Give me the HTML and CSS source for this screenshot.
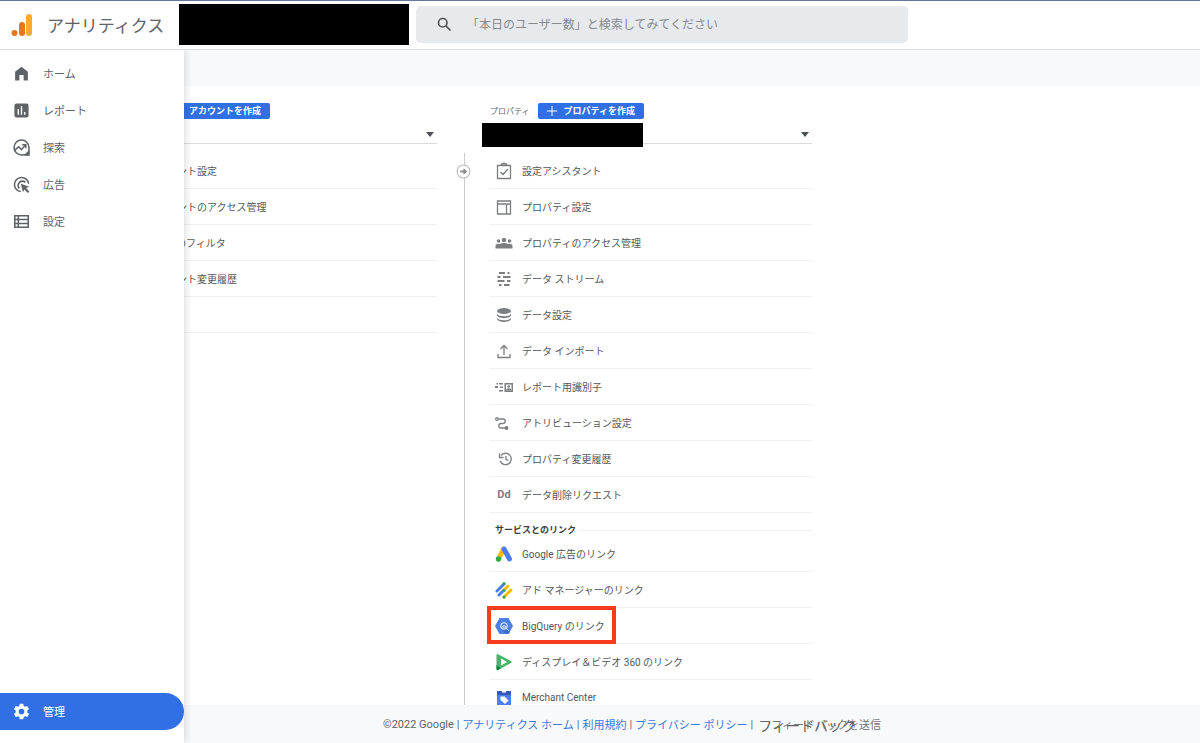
FILE: index.html
```html
<!DOCTYPE html>
<html lang="ja">
	<head>
		<meta charset="utf-8">
		<title>アナリティクス</title>
		<link rel="stylesheet" href="styles.css">
	</head>
	<body>
		<header class="header">
			<a class="brand" href="#">
				<svg class="logo" viewBox="0 0 24 24">
					<rect x="16" y="1" width="6" height="22" rx="3" fill="#f9ab2d"/>
					<rect x="9" y="9" width="6" height="14" rx="3" fill="#e37722"/>
					<circle cx="4.500" cy="20" r="3" fill="#e37722"/>
				</svg>
				<span>アナリティクス</span>
			</a>
			<div class="account"></div>
			<label class="search">
				<svg viewBox="0 0 24 24" fill="none" stroke="#4d5156" stroke-width="2.300"><circle cx="9.500" cy="9.500" r="6"/><path d="M14 14l6.500 6.500"/></svg>
				<input type="text" aria-label="検索" placeholder="「本日のユーザー数」と検索してみてください">
			</label>
		</header>

		<div class="page">
			<nav class="drawer">
				<a href="#">
					<svg viewBox="0 0 24 24"><path d="M3 9.500L12 2.500l9 7V22h-6v-8H9v8H3z"/></svg>
					ホーム
				</a>
				<a href="#">
					<svg viewBox="0 0 24 24"><path fill-rule="evenodd" d="M5 2h14a3 3 0 0 1 3 3v14a3 3 0 0 1-3 3H5a3 3 0 0 1-3-3V5a3 3 0 0 1 3-3zM6.500 10v8h2v-8zM11 6v12h2V6zm4.500 8v4h2v-4z"/></svg>
					レポート
				</a>
				<a href="#">
					<svg viewBox="0 0 24 24" fill="none" stroke="#5f6368" stroke-width="2.200"><path d="M22.500 22.500H12A10.500 10.500 0 1 1 22.500 12z"/><path d="M2 16l6-5 4 4 5-6"/><path d="M13 8h5v5" /><path d="M18 22l4-4v4z" fill="#5f6368"/></svg>
					探索
				</a>
				<a href="#">
					<svg viewBox="0 0 24 24" fill="none" stroke="#5f6368" stroke-width="2.200"><path d="M11 22A10 10 0 1 1 22 11"/><path d="M9 17.500A6 6 0 1 1 17.500 9"/><path d="M11 11l12 4-4.500 2 4.500 5-2 2-5-5-2 4z" fill="#5f6368" stroke="none"/></svg>
					広告
				</a>
				<a href="#">
					<svg viewBox="0 0 24 24" fill="none" stroke="#5f6368" stroke-width="2.200"><path d="M2.500 4h19v16h-19zM2 9.300h20M2 14.700h20M7.500 4v16"/></svg>
					設定
				</a>
				<a class="admin" href="#">
					<svg viewBox="0 0 24 24"><path fill-rule="evenodd" d="M9.500 1h5l.600 3.200 2 1.200 3-1.100 2.500 4.300-2.400 2.100v2.600l2.400 2.100-2.500 4.300-3-1.100-2 1.200-.600 3.200h-5l-.600-3.200-2-1.200-3 1.100-2.500-4.300 2.400-2.100v-2.600L1.400 8.600l2.500-4.300 3 1.100 2-1.200zM12 8a4 4 0 1 0 0 8 4 4 0 0 0 0-8z"/></svg>
					管理
				</a>
			</nav>

			<div class="band"></div>

			<main class="columns">
				<section class="column">
					<div class="column-head">
						<span>アカウント</span>
						<button class="create" type="button">
							<svg viewBox="0 0 12 12"><path d="M6 1v10M1 6h10"/></svg>
							アカウントを作成
						</button>
					</div>
					<div class="picker">
						<select aria-label="アカウント"><option></option></select>
					</div>
					<ul class="list">
						<li><a href="#"><i></i>アカウント設定</a></li>
						<li><a href="#"><i></i>アカウントのアクセス管理</a></li>
						<li><a href="#"><i></i>すべてのフィルタ</a></li>
						<li><a href="#"><i></i>アカウント変更履歴</a></li>
						<li><a href="#"><i></i>ゴミ箱</a></li>
					</ul>
				</section>

				<div class="divider">
					<button class="move" type="button" aria-label="移動">
						<svg viewBox="0 0 14 14"><circle cx="7" cy="7" r="6" fill="#fff" stroke="#bbb"/><path d="M4 6h3V4l3.500 3L7 10V8H4z" fill="#888"/></svg>
					</button>
				</div>

				<section class="column">
					<div class="column-head">
						<span>プロパティ</span>
						<button class="create" type="button">
							<svg viewBox="0 0 12 12"><path d="M6 1v10M1 6h10"/></svg>
							プロパティを作成
						</button>
					</div>
					<div class="picker">
						<select aria-label="プロパティ"><option></option></select>
						<div class="mask"></div>
					</div>
					<ul class="list">
						<li><a href="#">
							<svg viewBox="0 0 18 18" class="line"><path d="M2.500 3.500h13v13h-13zM6.500 3V2h1.500L9 1l1 1h1.500v1M5.500 10l2.500 2.500L13 7"/></svg>
							設定アシスタント
						</a></li>
						<li><a href="#">
							<svg viewBox="0 0 18 18" class="line"><path d="M2.500 3h13v13h-13zM2.500 6h13M11.500 6v10"/></svg>
							プロパティ設定
						</a></li>
						<li><a href="#">
							<svg viewBox="0 0 18 18"><circle cx="3.500" cy="7" r="1.800"/><circle cx="9" cy="6" r="2.200"/><circle cx="14.500" cy="7" r="1.800"/><path d="M.5 14.500V12C.5 10 3 9.500 5 10c2-1.200 6-1.200 8 0 2-.5 4.500 0 4.500 2v2.500z"/></svg>
							プロパティのアクセス管理
						</a></li>
						<li><a href="#">
							<svg viewBox="0 0 18 18" class="thick"><path d="M4 3h6M12.500 3h2M2.500 7h3M8 7h7.500M2.500 11h7M12 11h3.500M4 15h2.500M9 15h5.500"/></svg>
							データ ストリーム
						</a></li>
						<li><a href="#">
							<svg viewBox="0 0 18 18"><ellipse cx="9" cy="5" rx="7" ry="3"/><path d="M2 8c2 3 12 3 14 0v1.500c-2 3.500-12 3.500-14 0zM2 12c2 3 12 3 14 0v1.200c-2 3.600-12 3.600-14 0z"/></svg>
							データ設定
						</a></li>
						<li><a href="#">
							<svg viewBox="0 0 18 18" class="line"><path d="M9 13V4M5.500 7L9 3.500 12.500 7M3 12v3.500h12V12"/></svg>
							データ インポート
						</a></li>
						<li><a href="#">
							<svg viewBox="0 0 18 18"><path d="M0 8h3v2H0zM4 5h4v1.500H4zM5 8.500h3V10H5zM4 12h4v1.500H4zM1.500 5h1.500v1.500H1.500z"/><path fill-rule="evenodd" d="M9.500 5H18v9H9.500zM11 6.500v6h5.500v-6z"/><circle cx="13.700" cy="8.500" r="1.300"/><path d="M11 12.500c0-3 5.500-3 5.500 0z"/></svg>
							レポート用識別子
						</a></li>
						<li><a href="#">
							<svg viewBox="0 0 18 18" class="line"><circle cx="2" cy="5" r="1.300"/><path d="M3.500 5h4.500a2 2 0 0 1 0 4.500H6a2 2 0 0 0 0 4.500h4.500"/><circle cx="11.500" cy="14" r="1.300" fill="#7c7e80"/></svg>
							アトリビューション設定
						</a></li>
						<li><a href="#">
							<svg viewBox="0 0 18 18" class="line"><path d="M6 5.500A5.700 5.700 0 1 1 5.200 11M4.500 3.500v4h4M11 6v3.500l2.500 1"/></svg>
							プロパティ変更履歴
						</a></li>
						<li><a href="#"><b class="dd">Dd</b>データ削除リクエスト</a></li>
					</ul>
					<h2 class="group">サービスとのリンク</h2>
					<ul class="list">
						<li><a href="#">
							<svg viewBox="0 0 18 18" fill="none" stroke-linecap="round" stroke-width="5"><path d="M8.500 4L3.500 14" stroke="#fbbc04"/><path d="M9 4l5.500 10" stroke="#4a80e8"/><circle cx="3.500" cy="14" r="2.700" fill="#34a853" stroke="none"/></svg>
							Google 広告のリンク
						</a></li>
						<li><a href="#">
							<svg viewBox="0 0 18 18" fill="none" stroke-linecap="round" stroke-width="3"><path d="M2 10l7-7M4 14l5-5" stroke="#4a80e8"/><path d="M9 9l4-4M9 16l7-7" stroke="#fbbc04"/><path d="M9 2.500h.1M9 9.500h.1M9 16h.1" stroke="#34a853"/></svg>
							アド マネージャーのリンク
						</a></li>
						<li class="marked"><a href="#">
							<svg viewBox="0 0 18 18"><path d="M4.500 1h9L18 9l-4.500 8h-9L0 9z" fill="#4a80e8"/><path d="M12 12l3 3-1.500 2h-3L7 13z" fill="#3d6fd0"/><g fill="none" stroke="#fff"><circle cx="9" cy="9" r="3.300"/><path d="M11.500 11.500l2 2M7.500 9v1.500M9 8v3M10.500 9v1.500"/></g></svg>
							BigQuery のリンク
						</a></li>
						<li><a href="#">
							<svg viewBox="0 0 18 18"><path d="M1.500 2q0-1.500 1.500-.8L16 8q1.500 1 0 2L3 17q-1.500.5-1.500-1z" fill="#45b66b"/><path d="M1.500 12L6 15.500 3 17q-1.500.5-1.500-1z" fill="#188045"/><path d="M6 5.500v7L12 9z" fill="#fff"/></svg>
							ディスプレイ＆ビデオ 360 のリンク
						</a></li>
						<li><a href="#">
							<svg viewBox="0 0 18 18"><path d="M2 2h14v15H2z" fill="#4a80e8"/><path d="M2 2h14v4H2z" fill="#3457bd"/><path d="M7 2h4v1.500H7z" fill="#fff"/><path d="M5.500 7.500h4l4 4-3.500 3.500-4.500-4z" fill="#fff"/></svg>
							Merchant Center
						</a></li>
					</ul>
				</section>
			</main>

			<footer class="footer">
				<span>©2022 Google</span> |
				<a href="#">アナリティクス ホーム</a> |
				<a href="#">利用規約</a> |
				<a href="#">プライバシー ポリシー</a> |
				<button class="feedback" type="button">フィードバックを送信<span>フィードバック</span></button>
			</footer>
		</div>
	</body>
</html>
```
FILE: styles.css
```css
*, *::after {
	box-sizing: border-box;
}

body {
	margin: 0;
	height: 100vh;
	display: flex;
	flex-direction: column;
	overflow: hidden;
	font-family: Roboto, "Noto Sans CJK JP", sans-serif;
	font-size: 10px;
	color: #5f6368;
	background: #fff;
}

a {
	color: inherit;
	text-decoration: none;
}

button, input, select {
	font: inherit;
	border: 0;
	padding: 0;
	background: none;
}

.header {
	flex: none;
	height: 50px;
	padding-bottom: 1px;
	display: flex;
	align-items: center;
	border-top: 1px solid #66769a;
	border-bottom: 1px solid #dadce0;
}

.brand {
	width: 179px;
	padding-left: 10px;
	display: flex;
	align-items: center;
	gap: 13px;
	font-size: 17px;
	white-space: nowrap;
}

.logo {
	width: 24px;
	height: 24px;
}

.account {
	width: 230px;
	height: 41px;
	background: #000;
}

.search {
	width: 41%;
	height: 37px;
	margin-left: 7px;
	padding-left: 20px;
	display: flex;
	align-items: center;
	gap: 14px;
	border-radius: 5px;
	background: #e8e9ed;
}

.search svg {
	width: 17px;
	height: 17px;
}

.search input {
	flex: 1;
	font-size: 12px;
	outline: 0;
}

.search input::placeholder {
	color: #858a8e;
}

.page {
	flex: 1;
	min-height: 0;
	display: flex;
	flex-direction: column;
	position: relative;
}

/* drawer opens over the content */
.drawer {
	position: absolute;
	z-index: 2;
	top: 0;
	bottom: 0;
	left: 0;
	width: 184px;
	padding: 5px 0 13px;
	display: flex;
	flex-direction: column;
	background: #fff;
	box-shadow: 1px 0 8px rgba(60, 64, 67, 0.2);
	clip-path: inset(0 -12px 0 0);
}

.drawer a {
	height: 37px;
	padding: 0 0 1px 13px;
	display: flex;
	align-items: center;
	gap: 13px;
	font-size: 11px;
}

.drawer svg {
	width: 17px;
	height: 17px;
	fill: #5f6368;
}

.drawer svg[fill="none"] {
	fill: none;
}

.drawer .admin {
	margin-top: auto;
	border-radius: 0 19px 19px 0;
	color: #fff;
	background: #306fe4;
}

.drawer .admin svg {
	fill: #fff;
}

.band {
	flex: none;
	height: 36px;
	background: #f8f9fb;
}

.columns {
	flex: 1;
	min-height: 0;
	padding-left: 115px;
	display: grid;
	grid-template-columns: minmax(0, 322px) 53px minmax(0, 322px);
	overflow: hidden;
}

.column-head {
	height: 34px;
	padding-top: 15px;
	display: flex;
	align-items: center;
	gap: 8px;
	font-size: 8px;
	white-space: nowrap;
}

.create {
	height: 16px;
	padding: 0 9px 0 8px;
	display: flex;
	align-items: center;
	gap: 6px;
	border-radius: 2px;
	font-size: 9px;
	font-weight: bold;
	color: #fff;
	background: #306fe4;
}

.create svg {
	width: 12px;
	height: 12px;
	fill: none;
	stroke: #fff;
}

.picker {
	position: relative;
	height: 24px;
	border-bottom: 1px solid #dadce0;
}

.picker select {
	width: 100%;
	height: 100%;
	appearance: none;
}

.picker::after {
	content: "";
	position: absolute;
	top: 12px;
	right: 3px;
	border: 4px solid transparent;
	border-top: 5px solid #4d5156;
	border-bottom: 0;
}

.mask {
	position: absolute;
	top: 3px;
	left: -8px;
	width: 161px;
	height: 24px;
	background: #000;
}

.list {
	margin: 0;
	padding: 0;
	list-style: none;
}

.picker + .list {
	margin-top: 9px;
}

.list li {
	position: relative;
	height: 36px;
	border-bottom: 1px solid #f0f0f1;
}

.list a {
	height: 100%;
	padding-left: 5px;
	display: flex;
	align-items: center;
	gap: 9px;
	color: #54575a;
	white-space: nowrap;
}

.list svg, .list i, .dd {
	width: 18px;
	height: 18px;
	fill: #7c7e80;
}

.list svg[fill="none"] {
	fill: none;
}

.list .line, .list .thick {
	fill: none;
	stroke: #7c7e80;
	stroke-width: 1.3px;
}

.list .thick {
	stroke-width: 2px;
}

.dd {
	font-size: 11px;
	line-height: 18px;
	text-align: center;
	color: #7c7e80;
}

.group {
	height: 23px;
	margin: 0;
	padding: 11px 0 0 5px;
	display: flex;
	align-items: center;
	gap: 3px;
	font-size: 9px;
	line-height: 12px;
	color: #3c4043;
}

.group::after {
	content: "";
	flex: 1;
	border-top: 1px solid #f0f0f1;
}

.marked::after {
	content: "";
	position: absolute;
	top: -2px;
	left: -3px;
	width: 129px;
	height: 38px;
	border: 4px solid #f63b1e;
}

.divider {
	margin-top: 67px;
	position: relative;
	background: linear-gradient(#ccc, #ccc) 27px 0 / 1px 100% no-repeat;
}

.move {
	position: absolute;
	top: 11px;
	left: 19px;
	width: 15px;
	height: 15px;
}

.move svg {
	display: block;
}

.footer {
	flex: none;
	height: 38px;
	padding-left: 383px;
	display: flex;
	align-items: center;
	gap: 3px;
	font-size: 11px;
	white-space: nowrap;
	background: #f8f9fb;
}

.footer a {
	color: #3b78e0;
}

.feedback {
	position: relative;
	margin-left: 15px;
	color: #777;
}

/* large label sits over the small one */
.feedback span {
	position: absolute;
	top: 0;
	left: -13px;
	font-size: 14px;
	line-height: 20px;
	color: #5f6368;
}
```
